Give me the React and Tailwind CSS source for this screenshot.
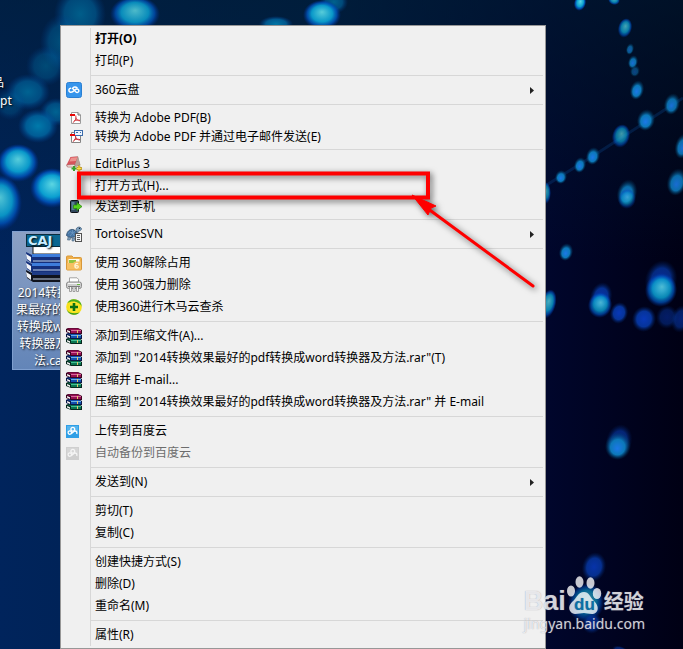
import clsx from 'clsx'

const ARCHIVE = '"2014转换效果最好的pdf转换成word转换器及方法.rar"'

// One inner array per block of the menu, blocks are split by a separator
const menuGroups = [
  [
    { label: '打开(O)', bold: true },
    { label: '打印(P)' },
  ],
  [{ label: '360云盘', icon: CloudDiskIcon, submenu: true }],
  [
    { label: '转换为 Adobe PDF(B)', icon: PdfIcon, compact: true },
    { label: '转换为 Adobe PDF 并通过电子邮件发送(E)', icon: PdfMailIcon, compact: true },
  ],
  [
    { label: 'EditPlus 3', icon: EditPlusIcon },
    { label: '打开方式(H)...', marked: true },
    { label: '发送到手机', icon: PhoneIcon, compact: true },
  ],
  [{ label: 'TortoiseSVN', icon: TortoiseIcon, submenu: true }],
  [
    { label: '使用 360解除占用', icon: FolderIcon },
    { label: '使用 360强力删除', icon: ShredderIcon },
    { label: '使用360进行木马云查杀', icon: ScanIcon },
  ],
  [
    { label: '添加到压缩文件(A)...', icon: RarIcon },
    { label: `添加到 ${ARCHIVE}(T)`, icon: RarIcon },
    { label: '压缩并 E-mail...', icon: RarIcon },
    { label: `压缩到 ${ARCHIVE} 并 E-mail`, icon: RarIcon },
  ],
  [
    { label: '上传到百度云', icon: BaiduCloudIcon },
    { label: '自动备份到百度云', icon: BaiduCloudIcon, disabled: true },
  ],
  [{ label: '发送到(N)', submenu: true }],
  [{ label: '剪切(T)' }, { label: '复制(C)' }],
  [{ label: '创建快捷方式(S)' }, { label: '删除(D)' }, { label: '重命名(M)' }],
  [{ label: '属性(R)' }],
]

function CloudDiskIcon() {
  return (
    <svg width="16" height="16" viewBox="0 0 16 16">
      <rect x="0.5" y="0.5" width="15" height="15" rx="2" fill="#3695ec" stroke="#2a7fd2" />
      <path
        d="M4.6 6.2C2.6 6.4 2.2 9 4 10C6 11 7.4 9.4 8.8 8C10.2 6.6 12.2 6.6 12.8 8.2C13.2 9.8 11.8 10.8 10.4 10.4L6.6 6.4C7.6 4.8 9.8 4.6 11 5.8"
        fill="none"
        stroke="#fff"
        strokeWidth="1.5"
        strokeLinecap="round"
      />
    </svg>
  )
}

function PdfIcon() {
  return (
    <svg width="12" height="12" viewBox="0 0 12 12">
      <path d="M1.5 0.5H8L10.5 3V11.5H1.5Z" fill="#fff" stroke="#9c9c9c" />
      <path d="M8 0.5V3H10.5" fill="#ddd" stroke="#777" />
      <path d="M5.8 3.5C6.6 7 4.8 9.5 2.8 10.6M5.8 5.5C6.5 8 8 8.8 10 8.8M4 9C6 8 8 7.8 10 8.4" fill="none" stroke="#d2393f" />
      <rect x="0" y="2" width="5" height="2" fill="#e80808" />
    </svg>
  )
}

function PdfMailIcon() {
  return (
    <svg width="13" height="13" viewBox="0 0 13 13">
      <path d="M1.5 2.5H10.5V12.5H1.5Z" fill="#fff" stroke="#858585" />
      <path d="M5.5 5.5C6.2 8.5 4.8 10.5 2.8 11.6M5.5 7C6.2 9 8 10 10 10M4 10C6 9 8 9 10 9.6" fill="none" stroke="#c92b33" />
      <rect x="4.5" y="0.5" width="8" height="5" fill="#eef5ff" stroke="#3c6dab" />
      <path d="M6 2.5H8M10 2.5H11" stroke="#3c6dab" />
      <rect x="0" y="4" width="5" height="2" fill="#e80808" />
    </svg>
  )
}

function EditPlusIcon() {
  return (
    <svg width="16" height="16" viewBox="0 0 16 16">
      <path d="M4.5 1L12 0.5L14.5 9L9.5 11Z" fill="#9c9088" />
      <path d="M4.5 1L12 0.5L9 8.5L0.5 9Z" fill="#d6525a" />
      <path d="M5 1.8L11.4 1.3L10 5L3.4 5.4Z" fill="#ec918e" />
      <path d="M0.5 9L9 8.5L8.6 11L1.5 11Z" fill="#f4efe9" stroke="#9b4a4a" strokeWidth="0.6" />
      <path d="M9.2 8.5L12 0.5L13.8 8L9.6 11Z" fill="#b7a298" />
      <path d="M8 10V15M5.5 12.5H10.5" stroke="#38a02c" strokeWidth="2" />
      <path d="M13 9.5V15.5M10.5 12.5H16" stroke="#b98b06" strokeWidth="2.4" />
      <path d="M13 10V15M11 12.5H15.5" stroke="#ffe24d" strokeWidth="1.2" />
    </svg>
  )
}

function PhoneIcon() {
  return (
    <svg width="12" height="13" viewBox="0 0 12 13">
      <rect x="0.5" y="0.5" width="8" height="12" rx="1" fill="#31485e" stroke="#0c1116" />
      <rect x="1.5" y="2" width="3" height="8" fill="#5a8096" />
      <path d="M3.5 5H7V2.5L12 6.5L7 10.5V8.5H3.5Z" fill="#57d31b" stroke="#268a0b" strokeWidth="0.7" />
    </svg>
  )
}

function TortoiseIcon() {
  return (
    <svg width="16" height="16" viewBox="0 0 16 16">
      <path d="M10 4C10 1 14 0 15.5 2.5C15.8 4 14 5 12.5 5L11 8Z" fill="#7da1c0" stroke="#3f5c78" strokeWidth="0.7" />
      <circle cx="13.5" cy="2.4" r="0.7" fill="#16283a" />
      <path d="M0.5 9.5C1 5 4 3 7 3.5C10 4 11 7 10.5 10C7 12 3 12 0.5 9.5Z" fill="#4776a5" stroke="#294867" strokeWidth="0.8" />
      <path d="M2 8L4 5.5L6.5 7L9 5.5M4 10L6.5 7L8.5 10M6.5 3.8V7" fill="none" stroke="#6c97c0" strokeWidth="0.8" />
      <path d="M2 11L1.5 14H4L5 11.8ZM6 12L6 15H8L9 12Z" fill="#7d9db9" stroke="#4c6780" strokeWidth="0.6" />
      <rect x="9.5" y="7.5" width="6" height="8" fill="#f4f4f4" stroke="#525252" />
      <path d="M11 9.5H14M11 11.5H14M11 13.5H14" stroke="#5e5e5e" />
    </svg>
  )
}

function FolderIcon() {
  return (
    <svg width="16" height="16" viewBox="0 0 16 16">
      <path d="M0.5 2Q0.5 1 1.5 1H6L7.5 2.5H14.5Q15.5 2.5 15.5 3.5V14Q15.5 15 14.5 15H1.5Q0.5 15 0.5 14Z" fill="#f0b04a" stroke="#d8983a" />
      <rect x="2.5" y="4" width="11" height="5" fill="#fffbe9" />
      <rect x="3" y="5" width="7" height="3" fill="#8fc43d" />
      <path d="M1 8H7L9 6.5H15V14.5H1Z" fill="#f7c062" />
      <path d="M12.2 8.6C9.6 8 8.8 9.5 8.8 11C8.8 13.8 12.3 13.6 12.3 11.8C12.3 10.2 9.8 10.4 9.2 11.5" fill="none" stroke="#fff5d8" strokeWidth="1.2" />
    </svg>
  )
}

function ShredderIcon() {
  return (
    <svg width="16" height="16" viewBox="0 0 16 16">
      <path d="M3.5 6V0.8H11L12.5 2.3V6" fill="#fff" stroke="#a3a3a3" />
      <rect x="0.5" y="5" width="15" height="6.5" rx="2" fill="#cdcdcd" stroke="#8d8d8d" />
      <path d="M2 6.5H14" stroke="#f6f6f6" />
      <path d="M2 9.5H14" stroke="#7c7c7c" />
      <rect x="11" y="7" width="3" height="1" fill="#67ba3d" />
      <path d="M3.5 10V14.5H5.5V10M7 10V14.5H9V10M10.5 10V14.5H12.5V10" fill="#f5f5f5" stroke="#8b8b8b" strokeWidth="0.8" />
    </svg>
  )
}

function ScanIcon() {
  return (
    <svg width="16" height="16" viewBox="0 0 16 16">
      <circle cx="8" cy="8" r="7.8" fill="#f8e119" />
      <path d="M1.2 4.2A7.8 7.8 0 0 1 15.8 8C14.4 3.4 7 0.6 1.2 4.2Z" fill="#48ad22" />
      <path d="M0.6 10.5A7.8 7.8 0 0 0 13.5 13.5C9 15 3 14.6 0.6 10.5Z" fill="#3a9d1e" />
      <circle cx="8" cy="8" r="5.3" fill="#f9e52c" />
      <path d="M6.7 4H9.3V6.7H12V9.3H9.3V12H6.7V9.3H4V6.7H6.7Z" fill="#0b7212" />
    </svg>
  )
}

function Book({ y, cover, light, dark }) {
  return (
    <g transform={`translate(0 ${y})`}>
      <path d="M0 1L2 0H12L16 2V6H5L0 4Z" fill={dark} />
      <path d="M1 1L3 0.4H12L15 2H5Z" fill={cover} />
      <path d="M5 2H15V3H5Z" fill={light} />
      <path d="M5 3H15V5H5Z" fill={cover} />
      <path d="M1 2L4 3.2V5L1 3.6Z" fill="#f6f6f6" />
      <path d="M11 2H12V5H11Z" fill="#e3c66d" />
    </g>
  )
}

function RarIcon() {
  return (
    <svg width="16" height="16" viewBox="0 0 16 16">
      <Book y={10} cover="#0a7650" light="#3fbf94" dark="#06281d" />
      <Book y={5} cover="#134fae" light="#68b2e6" dark="#0a1746" />
      <Book y={0} cover="#960f52" light="#d8649c" dark="#3c0420" />
    </svg>
  )
}

function BaiduCloudIcon({ disabled }) {
  return (
    <svg width="13" height="13" viewBox="0 0 13 13">
      <rect width="13" height="13" fill={disabled ? '#cfcfcf' : '#2f9fe6'} />
      <rect x="1" y="1" width="11" height="6" fill={disabled ? '#d6d6d6' : '#55b4ee'} />
      <g fill="none" stroke={disabled ? '#f5f5f5' : '#fff'} strokeWidth="1.3">
        <circle cx="3.8" cy="7.6" r="1.7" />
        <circle cx="6.8" cy="4.3" r="1.9" />
        <path d="M5.2 8.8L8.2 6.2C10 5.4 11.4 7 10.8 9" />
      </g>
    </svg>
  )
}

// Red frame round a menu row plus the arrow that points to it
function Callout() {
  return (
    <svg
      className="pointer-events-none absolute -top-1 left-4 z-10 overflow-visible drop-shadow-[2px_2px_3px_rgba(0,0,0,0.6)]"
      width="352"
      height="28"
      viewBox="0 0 352 28"
    >
      <rect x="2" y="2.5" width="349" height="24" fill="none" stroke="#fe0000" strokeWidth="4" />
      <path d="M350 37L456 115" stroke="#fe0000" strokeWidth="3" strokeLinecap="round" />
      <path d="M335 24L359 35L354 37L351 44Z" fill="#fe0000" stroke="#fe0000" strokeWidth="1" />
    </svg>
  )
}

function MenuItem({ item }) {
  const Icon = item.icon

  return (
    <li role="none" className="relative">
      <button
        type="button"
        role="menuitem"
        disabled={item.disabled}
        className={clsx(
          'flex w-full items-center text-left',
          item.compact ? 'h-[19px]' : 'h-[22px]',
          item.bold && 'font-bold',
          item.disabled ? 'text-[#6d6d6d]' : 'text-black'
        )}
      >
        <span
          className={clsx(
            'flex w-[29px] shrink-0',
            item.compact ? 'pl-[9px]' : 'pl-[5px]'
          )}
        >
          {Icon && <Icon disabled={item.disabled} />}
        </span>
        <span className="flex h-full flex-1 items-center border-l border-[#d7d7d7] pl-1 whitespace-nowrap">
          {item.label}
        </span>
        {item.submenu && (
          <svg className="mr-[11px]" width="4" height="7" viewBox="0 0 4 7">
            <path d="M0 0L4 3.5L0 7Z" fill="#222" />
          </svg>
        )}
      </button>
      {item.marked && <Callout />}
    </li>
  )
}

function ContextMenu() {
  return (
    <ul
      role="menu"
      className="relative w-[486px] max-w-full border border-[#979797] bg-[#f0f0f0] py-0.5 text-[12px] leading-4"
    >
      {menuGroups.map((group, i) => (
        <li key={i} role="none">
          {i > 0 && (
            <div role="separator" className="ml-[29px] h-[7px] border-l border-[#d7d7d7] pt-[3px] pr-0.5">
              <div className="h-px bg-[#d7d7d7]" />
            </div>
          )}
          <ul role="group">
            {group.map((item) => (
              <MenuItem key={item.label} item={item} />
            ))}
          </ul>
        </li>
      ))}
    </ul>
  )
}

// cx, cy, rx, ry, fill, opacity
const bokeh = [
  [80, 14, 26, 28, 'teal', 0.65],
  [62, 42, 22, 28, 'teal', 0.5],
  [46, 66, 20, 20, 'teal', 0.45],
  [28, 92, 22, 18, 'teal', 0.7],
  [10, 104, 16, 16, 'teal', 0.35],
  [56, 112, 16, 14, 'teal', 0.7],
  [38, 126, 20, 17, 'teal', 0.95],
  [135, 14, 25, 18, 'cyan', 0.85],
  [276, 24, 17, 8, 'teal', 0.9],
  [334, 2, 14, 12, 'teal', 0.7],
  [322, 15, 19, 15, 'cyan', 0.95],
  [18, 163, 21, 19, 'cyan', 0.95],
  [52, 188, 22, 20, 'cyan', 1],
  [0, 203, 22, 28, 'cyan', 0.9],
  [580, 3, 6, 8, 'cyan', 1],
  [614, 0, 6, 5, 'cyan', 0.8],
  [625, 28, 7, 10, 'cyan', 0.75],
  [630, 49, 4, 6, 'blue', 0.7],
  [633, 62, 5, 7, 'blue', 0.9],
  [635, 71, 5, 6, 'blue', 0.5],
  [637, 90, 7, 10, 'blue', 1],
  [672, 104, 8, 11, 'blue', 0.9],
  [646, 120, 9, 11, 'blue', 1],
  [621, 136, 9, 12, 'cyan', 0.7],
  [593, 156, 7, 9, 'blue', 1],
  [580, 165, 6, 8, 'blue', 1],
  [561, 177, 6, 7, 'blue', 1],
  [546, 193, 5, 11, 'cyan', 0.7],
  [683, 146, 8, 13, 'blue', 0.9],
  [677, 182, 10, 14, 'blue', 0.9],
  [627, 193, 10, 14, 'blue', 0.9],
  [627, 199, 9, 10, 'cyan', 0.5],
  [566, 252, 7, 9, 'blue', 1],
  [548, 304, 8, 15, 'cyan', 0.8],
  [601, 297, 11, 15, 'navy', 0.9],
  [600, 305, 12, 13, 'cyan', 0.8],
  [619, 313, 9, 11, 'navy', 1],
  [644, 319, 12, 13, 'navy', 1],
  [661, 280, 16, 20, 'navy', 0.8],
  [661, 290, 16, 17, 'cyan', 0.85],
  [667, 317, 11, 12, 'navy', 0.5],
  [681, 319, 10, 14, 'navy', 0.6],
  [619, 441, 13, 17, 'navy', 0.7],
  [618, 446, 13, 14, 'blue', 1],
  [594, 567, 12, 15, 'navy', 0.9],
  [586, 603, 18, 20, 'cyan', 0.65],
  [592, 623, 10, 11, 'navy', 0.7],
  [620, 650, 8, 4, 'navy', 0.6],
]

function Wallpaper() {
  return (
    <svg
      className="absolute inset-0 h-full w-full"
      viewBox="0 0 683 649"
      preserveAspectRatio="xMidYMid slice"
      aria-hidden="true"
    >
      <defs>
        <linearGradient id="sky" x1="0" y1="0" x2="1" y2="0">
          <stop offset="0" stopColor="#00245c" />
          <stop offset="0.45" stopColor="#001f48" />
          <stop offset="0.8" stopColor="#00062c" />
          <stop offset="1" stopColor="#000014" />
        </linearGradient>
        <linearGradient id="shade" x1="0" y1="0" x2="0" y2="1">
          <stop offset="0" stopColor="#001c33" stopOpacity="0.6" />
          <stop offset="0.4" stopColor="#001c33" stopOpacity="0" />
        </linearGradient>
        <radialGradient id="teal">
          <stop offset="0" stopColor="#007fb0" />
          <stop offset="0.6" stopColor="#006aa6" stopOpacity="0.85" />
          <stop offset="1" stopColor="#003f96" stopOpacity="0" />
        </radialGradient>
        <radialGradient id="cyan" fx="0.5" fy="0.4">
          <stop offset="0" stopColor="#5cd6e2" />
          <stop offset="0.55" stopColor="#0a9fd0" />
          <stop offset="0.78" stopColor="#0058c4" stopOpacity="0.8" />
          <stop offset="1" stopColor="#0030a0" stopOpacity="0" />
        </radialGradient>
        <radialGradient id="blue" fx="0.5" fy="0.6">
          <stop offset="0" stopColor="#1c78e8" />
          <stop offset="0.55" stopColor="#0c78b8" />
          <stop offset="1" stopColor="#003a60" stopOpacity="0" />
        </radialGradient>
        <radialGradient id="navy">
          <stop offset="0" stopColor="#0838b8" />
          <stop offset="0.6" stopColor="#06349a" />
          <stop offset="1" stopColor="#00205a" stopOpacity="0" />
        </radialGradient>
      </defs>
      <rect width="683" height="649" fill="url(#sky)" />
      <rect width="683" height="649" fill="url(#shade)" />
      <path d="M545 186L593 156L683 98" stroke="#0a4a90" strokeWidth="3" opacity="0.3" fill="none" />
      {bokeh.map(([cx, cy, rx, ry, fill, opacity], i) => (
        <ellipse
          key={i}
          cx={cx}
          cy={cy}
          rx={rx}
          ry={ry}
          fill={`url(#${fill})`}
          opacity={opacity}
          transform={`rotate(${cx > 546 ? 15 : 0} ${cx} ${cy})`}
        />
      ))}
    </svg>
  )
}

function CajIcon() {
  return (
    <svg width="48" height="50" viewBox="0 0 48 50">
      <path d="M7 12H44V20H7Z" fill="#fff" stroke="#222" />
      <rect x="0.5" y="0.5" width="47" height="12" fill="#0b6791" stroke="#0a2c3d" />
      <text x="2" y="11" fontSize="13" fontWeight="bold" fill="#c9ecff" fontFamily="DejaVu Sans">
        CAJ
      </text>
      {[18, 27, 36].map((y, i) => (
        <g key={y}>
          <path d={`M0 ${y}L6 ${y + 3}H48V${y + 12}H7L1 ${y + 8}Z`} fill={i === 2 ? '#10131d' : '#15307c'} />
          <path d={`M6 ${y + 2}H48V${y + 5}H6Z`} fill={i === 2 ? '#1f3c86' : '#3e7ddb'} />
          <path d={`M7 ${y + 9}H48`} stroke="#c3d2e8" strokeWidth="1" />
          <path d={`M0 ${y + 2}L5 ${y + 5}V${y + 10}L1 ${y + 7}Z`} fill="#f2f5fa" />
        </g>
      ))}
    </svg>
  )
}

function DesktopFiles() {
  return (
    <div className="text-[12px] leading-[17px] text-white [text-shadow:1px_1px_2px_#000]">
      <div className="absolute top-[74px] -left-2 leading-[18px]">
        <p>品</p>
        <p className="pl-2">pt</p>
      </div>
      <div className="absolute top-[231px] left-3 flex w-[75px] flex-col items-center border border-[#7f9fcf] bg-linear-to-b from-[#8ba0c4] to-[#6385b8] pt-0.5 text-center">
        <CajIcon />
        <p className="whitespace-nowrap">
          2014转换效
          <br />
          果最好的pdf
          <br />
          转换成word
          <br />
          转换器及方
          <br />
          法.caj
        </p>
      </div>
    </div>
  )
}

function Watermark() {
  return (
    <a
      href="#jingyan"
      className="absolute right-[38px] bottom-4 flex flex-col text-white/75 [text-shadow:0_0_1px_rgba(120,120,140,0.7)]"
    >
      <span className="flex h-[38px] items-end">
        <span className="font-['Liberation_Sans'] text-[27px] leading-[26px] font-bold">Bai</span>
        <svg width="36" height="38" viewBox="0 0 36 38" fill="#fff" fillOpacity="0.78">
          <ellipse cx="5" cy="15" rx="4" ry="5.5" />
          <ellipse cx="13.5" cy="6" rx="4" ry="5.8" />
          <ellipse cx="24.5" cy="7" rx="4" ry="5.8" />
          <ellipse cx="31" cy="17.5" rx="4.2" ry="5.5" />
          <path d="M18 16C23 16 24 21 28 25C35 32 31 38 26 38C22 38 20 37 18 37C15 37 13 38 9 38C3 37 1 31 6 26C11 22 12 16 18 16Z" />
          <text x="8" y="34" fontSize="17" fontWeight="bold" fontFamily="Liberation Sans" fill="#0a6fa6" fillOpacity="1">
            du
          </text>
        </svg>
        <span className="pl-0.5 text-[20px] leading-[24px] font-bold">经验</span>
      </span>
      <span className="text-[14px] leading-[19px]">jingyan.baidu.com</span>
    </a>
  )
}

export default function App() {
  return (
    <main className="relative min-h-screen overflow-hidden bg-[#001a44] pt-[25px] pl-[60px] font-['Noto_Sans','Noto_Sans_CJK_SC',sans-serif]">
      <Wallpaper />
      <DesktopFiles />
      <ContextMenu />
      <Watermark />
    </main>
  )
}
